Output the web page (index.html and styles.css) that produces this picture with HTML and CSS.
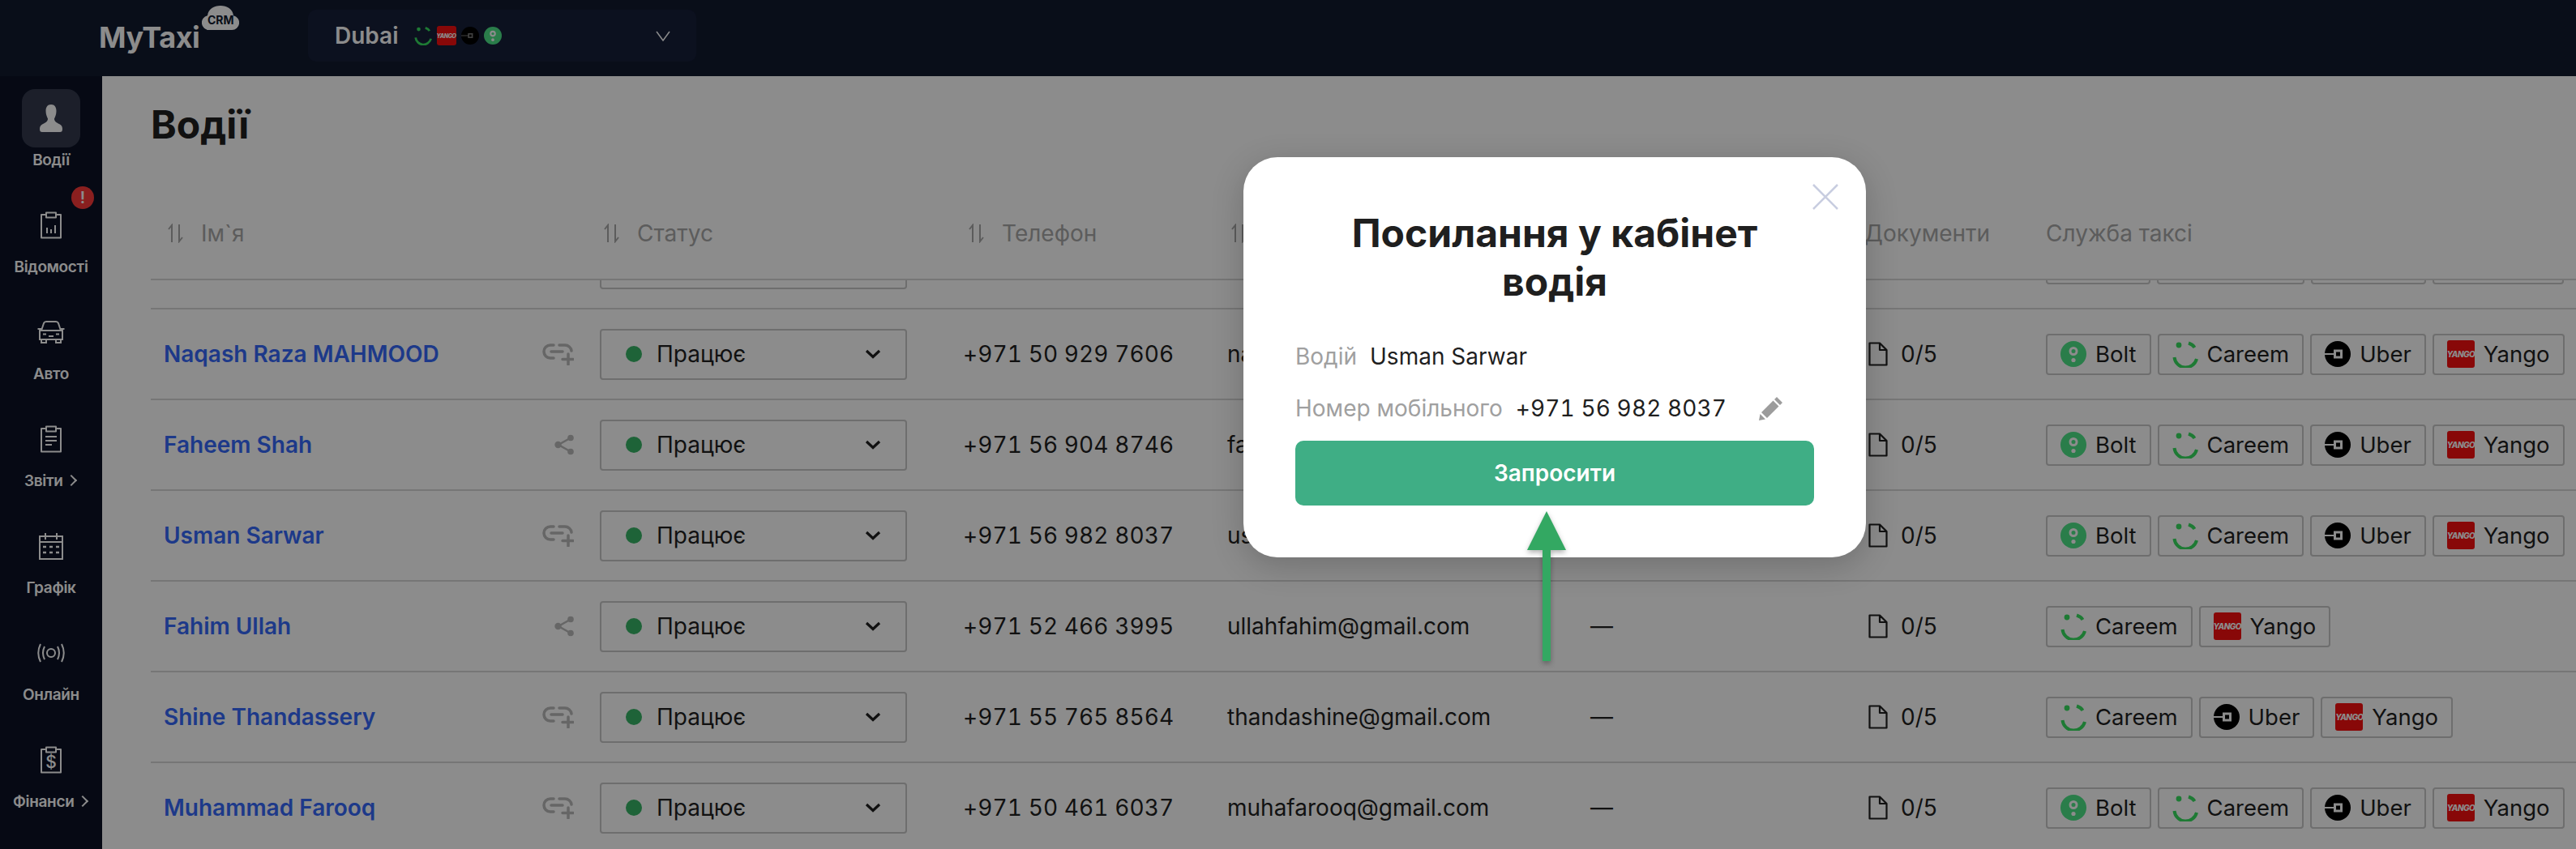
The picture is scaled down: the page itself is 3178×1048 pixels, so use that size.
FILE: index.html
```html
<!DOCTYPE html>
<html lang="uk">
<head>
    <meta charset="UTF-8">
    <title>MyTaxi CRM - Водії</title>
    <link rel="stylesheet" href="styles.css">
</head>
<body>
    <svg class="sprite" xmlns="http://www.w3.org/2000/svg">
        <symbol id="bolt" viewBox="0 0 32 32">
            <circle cx="16" cy="16" r="16" fill="#4ee388"/>
            <circle cx="16" cy="12.5" r="4" fill="#4ee388" stroke="#fff" stroke-width="3"/>
            <circle cx="16" cy="23.5" r="2.6" fill="#fff"/>
        </symbol>
        <symbol id="careem" viewBox="0 0 32 33">
            <circle cx="8" cy="5" r="3.4" fill="#38de60"/>
            <path d="M20 2.5C23 3.5 26 5.5 27.5 8M2.5 20A14 14 0 0 0 30 22" fill="none" stroke="#38de60" stroke-width="4"/>
        </symbol>
        <symbol id="uber" viewBox="0 0 32 32">
            <circle cx="16" cy="16" r="16" fill="#000"/>
            <path d="M0 15H11V10.5H22V21.5H11V17H0Z" fill="#fff"/>
            <rect x="14" y="13.5" width="5" height="5" fill="#000"/>
        </symbol>
        <symbol id="uber-small" viewBox="0 0 32 32">
            <circle cx="16" cy="16" r="16" fill="#000"/>
            <path d="M0 15.2H12V11.5H21V20.5H12V16.8H0Z" fill="#777"/>
            <rect x="14.5" y="14" width="4" height="4" fill="#000"/>
        </symbol>
        <symbol id="link" viewBox="0 0 40 27">
            <path d="M15 2H11A8 8 0 0 0 11 18H15M12 10H26M22 2H29A8 8 0 0 1 37 9M33 13V26M26 19.5H39" fill="none" stroke="#bababa" stroke-width="3.5" stroke-linecap="round"/>
        </symbol>
        <symbol id="share" viewBox="0 0 24 26">
            <path d="M20 4.5L5 13L20 21.5" fill="none" stroke="#bababa" stroke-width="2.5"/>
            <circle cx="20" cy="4.5" r="3.8" fill="#bababa"/>
            <circle cx="4.5" cy="13" r="4.2" fill="#bababa"/>
            <circle cx="20" cy="21.5" r="3.8" fill="#bababa"/>
        </symbol>
        <symbol id="sort" viewBox="0 0 19 24">
            <path d="M5 23V2L1 7M14 1V22L18 17" fill="none" stroke="#a8a8a8" stroke-width="2"/>
        </symbol>
        <symbol id="arrow-down" viewBox="0 0 20 12">
            <path d="M2 2L10 9.5L18 2" fill="none" stroke="#1f1f1f" stroke-width="3.2"/>
        </symbol>
        <symbol id="file" viewBox="0 0 24 30">
            <path d="M1.5 1.5H14L22.5 10V28.5H1.5ZM14 1.5V10H22.5" fill="none" stroke="#1f1f1f" stroke-width="2.2" stroke-linejoin="round"/>
        </symbol>
    </svg>

    <header class="topbar">
        <div class="logo">
            <span class="logo-name">MyTaxi</span>
            <span class="logo-crm">
                <svg viewBox="0 0 46 30" width="46" height="30"><path d="M9 30A9 9 0 0 1 7 12.2C8 4 15 0 23 0C31 0 38 4 39 12.2A9 9 0 0 1 37 30Z" fill="#fff"/></svg>
                <b>CRM</b>
            </span>
        </div>
        <div class="city-select">
            <span class="city-name">Dubai</span>
            <svg class="city-icon" width="22" height="24"><use href="#careem"/></svg>
            <span class="yango yango-small">YANGO</span>
            <svg class="city-icon" width="22" height="24"><use href="#uber-small"/></svg>
            <svg class="city-icon" width="22" height="24"><use href="#bolt"/></svg>
            <svg class="city-chevron" width="18" height="13" viewBox="0 0 18 13"><path d="M1 1L9 12L17 1" fill="none" stroke="#fff" stroke-width="1.5"/></svg>
        </div>
    </header>

    <div class="layout">
        <nav class="sidebar">
            <a class="nav-item active">
                <span class="nav-icon">
                    <svg width="28" height="34" viewBox="0 0 28 34"><path d="M14 0C18.5 0 20.5 3.5 20.5 8C20.5 12 19 15.5 18 17.5C18 21 21 22.5 24 24C26.5 25.3 28 27 28 30C28 33 27 34 25 34H3C1 34 0 33 0 30C0 27 1.5 25.3 4 24C7 22.5 10 21 10 17.5C9 15.5 7.5 12 7.5 8C7.5 3.5 9.5 0 14 0Z" fill="#fff"/></svg>
                </span>
                <span class="nav-label">Водії</span>
            </a>
            <a class="nav-item">
                <span class="nav-badge">!</span>
                <span class="nav-icon">
                    <svg width="28" height="34" viewBox="0 0 28 34"><path d="M8 4H2V32.5H26V4H20M8 1.5H20V7.5H8ZM9 20V27M14 22V27M19 17V27" fill="none" stroke="#fff" stroke-width="2" stroke-linejoin="round"/></svg>
                </span>
                <span class="nav-label">Відомості</span>
            </a>
            <a class="nav-item">
                <span class="nav-icon">
                    <svg width="34" height="28" viewBox="0 0 34 28"><path d="M5 12L8 3C8.5 1.8 9.5 1 11 1H23C24.5 1 25.5 1.8 26 3L29 12M0.5 10H5M29 10H33.5M3 12H31V23H3ZM5 23V27H11V23M23 23V27H29V23M7 16.5H11M23 16.5H27M14 19H20" fill="none" stroke="#fff" stroke-width="2"/></svg>
                </span>
                <span class="nav-label">Авто</span>
            </a>
            <a class="nav-item">
                <span class="nav-icon">
                    <svg width="28" height="34" viewBox="0 0 28 34"><path d="M8 4H2V32.5H26V4H20M8 1.5H20V7.5H8ZM7 14H21M7 19H21M7 24H15" fill="none" stroke="#fff" stroke-width="2" stroke-linejoin="round"/></svg>
                </span>
                <span class="nav-label">Звіти <i class="nav-more"></i></span>
            </a>
            <a class="nav-item">
                <span class="nav-icon">
                    <svg width="30" height="34" viewBox="0 0 30 34"><path d="M1 5H29V33H1ZM1 12H29M8 1V9M22 1V9" fill="none" stroke="#fff" stroke-width="2"/><path d="M5 18H9M13 18H17M21 18H25M5 25H9M13 25H17M21 25H25" fill="none" stroke="#fff" stroke-width="2.5"/></svg>
                </span>
                <span class="nav-label">Графік</span>
            </a>
            <a class="nav-item">
                <span class="nav-icon">
                    <svg width="34" height="24" viewBox="0 0 34 24"><circle cx="17" cy="12" r="5" fill="none" stroke="#fff" stroke-width="2"/><path d="M9 4C6.5 9 6.5 15 9 20M25 4C27.5 9 27.5 15 25 20M4 1C0.5 8 0.5 16 4 23M30 1C33.5 8 33.5 16 30 23" fill="none" stroke="#fff" stroke-width="2"/></svg>
                </span>
                <span class="nav-label">Онлайн</span>
            </a>
            <a class="nav-item">
                <span class="nav-icon">
                    <svg width="28" height="34" viewBox="0 0 28 34"><path d="M8 4H2V32.5H26V4H20M8 1.5H20V7.5H8Z" fill="none" stroke="#fff" stroke-width="2" stroke-linejoin="round"/><text x="14" y="27" text-anchor="middle" class="nav-dollar">$</text></svg>
                </span>
                <span class="nav-label">Фінанси <i class="nav-more"></i></span>
            </a>
        </nav>

        <main class="content">
            <h1 class="page-title">Водії</h1>

            <div class="table-head table-grid">
                <div class="th"><svg class="sort" width="19" height="24"><use href="#sort"/></svg>Ім`я</div>
                <div class="th th-status"><svg class="sort" width="19" height="24"><use href="#sort"/></svg>Статус</div>
                <div class="th th-status"><svg class="sort" width="19" height="24"><use href="#sort"/></svg>Телефон</div>
                <div class="th th-status"><svg class="sort" width="19" height="24"><use href="#sort"/></svg></div>
                <div class="th"></div>
                <div class="th th-docs">Документи</div>
                <div class="th th-service">Служба таксі</div>
            </div>

            <div class="table-body">
                <!-- row scrolled under the table head, only its lower edge shows -->
                <div class="row table-grid row-first">
                    <div></div>
                    <div class="status"></div>
                    <div></div><div></div><div></div><div></div>
                    <div class="services">
                        <span class="chip chip-bolt"></span>
                        <span class="chip chip-careem"></span>
                        <span class="chip chip-uber"></span>
                        <span class="chip chip-yango"></span>
                    </div>
                </div>

                <div class="row table-grid">
                    <div class="cell-name"><a class="name">Naqash Raza MAHMOOD</a><svg class="act" width="40" height="27"><use href="#link"/></svg></div>
                    <div class="status"><i class="dot"></i>Працює<svg class="status-arrow" width="20" height="12"><use href="#arrow-down"/></svg></div>
                    <div class="phone">+971 50 929 7606</div>
                    <div>naqa</div>
                    <div>—</div>
                    <div class="docs"><svg width="24" height="30"><use href="#file"/></svg>0/5</div>
                    <div class="services">
                        <span class="chip"><svg width="32" height="32"><use href="#bolt"/></svg>Bolt</span>
                        <span class="chip"><svg width="32" height="33"><use href="#careem"/></svg>Careem</span>
                        <span class="chip"><svg width="32" height="32"><use href="#uber"/></svg>Uber</span>
                        <span class="chip"><span class="yango">YANGO</span>Yango</span>
                    </div>
                </div>

                <div class="row table-grid">
                    <div class="cell-name"><a class="name">Faheem Shah</a><svg class="act" width="24" height="26"><use href="#share"/></svg></div>
                    <div class="status"><i class="dot"></i>Працює<svg class="status-arrow" width="20" height="12"><use href="#arrow-down"/></svg></div>
                    <div class="phone">+971 56 904 8746</div>
                    <div>fahe</div>
                    <div>—</div>
                    <div class="docs"><svg width="24" height="30"><use href="#file"/></svg>0/5</div>
                    <div class="services">
                        <span class="chip"><svg width="32" height="32"><use href="#bolt"/></svg>Bolt</span>
                        <span class="chip"><svg width="32" height="33"><use href="#careem"/></svg>Careem</span>
                        <span class="chip"><svg width="32" height="32"><use href="#uber"/></svg>Uber</span>
                        <span class="chip"><span class="yango">YANGO</span>Yango</span>
                    </div>
                </div>

                <div class="row table-grid">
                    <div class="cell-name"><a class="name">Usman Sarwar</a><svg class="act" width="40" height="27"><use href="#link"/></svg></div>
                    <div class="status"><i class="dot"></i>Працює<svg class="status-arrow" width="20" height="12"><use href="#arrow-down"/></svg></div>
                    <div class="phone">+971 56 982 8037</div>
                    <div>usma</div>
                    <div>—</div>
                    <div class="docs"><svg width="24" height="30"><use href="#file"/></svg>0/5</div>
                    <div class="services">
                        <span class="chip"><svg width="32" height="32"><use href="#bolt"/></svg>Bolt</span>
                        <span class="chip"><svg width="32" height="33"><use href="#careem"/></svg>Careem</span>
                        <span class="chip"><svg width="32" height="32"><use href="#uber"/></svg>Uber</span>
                        <span class="chip"><span class="yango">YANGO</span>Yango</span>
                    </div>
                </div>

                <div class="row table-grid">
                    <div class="cell-name"><a class="name">Fahim Ullah</a><svg class="act" width="24" height="26"><use href="#share"/></svg></div>
                    <div class="status"><i class="dot"></i>Працює<svg class="status-arrow" width="20" height="12"><use href="#arrow-down"/></svg></div>
                    <div class="phone">+971 52 466 3995</div>
                    <div>ullahfahim@gmail.com</div>
                    <div>—</div>
                    <div class="docs"><svg width="24" height="30"><use href="#file"/></svg>0/5</div>
                    <div class="services">
                        <span class="chip"><svg width="32" height="33"><use href="#careem"/></svg>Careem</span>
                        <span class="chip"><span class="yango">YANGO</span>Yango</span>
                    </div>
                </div>

                <div class="row table-grid">
                    <div class="cell-name"><a class="name">Shine Thandassery</a><svg class="act" width="40" height="27"><use href="#link"/></svg></div>
                    <div class="status"><i class="dot"></i>Працює<svg class="status-arrow" width="20" height="12"><use href="#arrow-down"/></svg></div>
                    <div class="phone">+971 55 765 8564</div>
                    <div>thandashine@gmail.com</div>
                    <div>—</div>
                    <div class="docs"><svg width="24" height="30"><use href="#file"/></svg>0/5</div>
                    <div class="services">
                        <span class="chip"><svg width="32" height="33"><use href="#careem"/></svg>Careem</span>
                        <span class="chip"><svg width="32" height="32"><use href="#uber"/></svg>Uber</span>
                        <span class="chip"><span class="yango">YANGO</span>Yango</span>
                    </div>
                </div>

                <div class="row table-grid">
                    <div class="cell-name"><a class="name">Muhammad Farooq</a><svg class="act" width="40" height="27"><use href="#link"/></svg></div>
                    <div class="status"><i class="dot"></i>Працює<svg class="status-arrow" width="20" height="12"><use href="#arrow-down"/></svg></div>
                    <div class="phone">+971 50 461 6037</div>
                    <div>muhafarooq@gmail.com</div>
                    <div>—</div>
                    <div class="docs"><svg width="24" height="30"><use href="#file"/></svg>0/5</div>
                    <div class="services">
                        <span class="chip"><svg width="32" height="32"><use href="#bolt"/></svg>Bolt</span>
                        <span class="chip"><svg width="32" height="33"><use href="#careem"/></svg>Careem</span>
                        <span class="chip"><svg width="32" height="32"><use href="#uber"/></svg>Uber</span>
                        <span class="chip"><span class="yango">YANGO</span>Yango</span>
                    </div>
                </div>
            </div>
        </main>
    </div>

    <div class="overlay">
        <div class="modal">
            <svg class="modal-close" width="32" height="32" viewBox="0 0 32 32"><path d="M1 1L31 31M31 1L1 31" fill="none" stroke="#c8cde0" stroke-width="2.5"/></svg>
            <h2 class="modal-title">Посилання у кабінет водія</h2>
            <div class="field"><span class="field-label">Водій</span>Usman Sarwar</div>
            <div class="field field-phone">
                <span class="field-label">Номер мобільного</span><span class="phone">+971 56 982 8037</span>
                <svg class="field-edit" width="30" height="30" viewBox="0 0 30 30"><path d="M22 1L29 8L26 11L19 4ZM17.5 5.5L24.5 12.5L10 27L3 20ZM1.5 22L8 28.5L0 30Z" fill="#9c9c9c"/></svg>
            </div>
            <button class="invite">Запросити</button>
        </div>
        <svg class="pointer" width="52" height="190" viewBox="0 0 52 190"><path d="M26 2L50 50H31V187H21V50H2Z" fill="#33a862"/></svg>
    </div>
</body>
</html>
```

FILE: styles.css
```css
* {
    margin: 0;
    padding: 0;
    box-sizing: border-box;
}
html, body {
    height: 100%;
    overflow: hidden;
}
body {
    font-family: Inter, "Liberation Sans", sans-serif;
    font-size: 28px;
    color: #1f1f1f;
    background: #fff;
}
.sprite {
    display: none;
}

/* top bar */
.topbar {
    height: 94px;
    background: #121a2f;
    display: flex;
    align-items: center;
    padding: 0 0 6px 122px;
    color: #fff;
}
.logo {
    width: 258px;
    display: flex;
    align-items: flex-start;
    height: 88px;
}
.logo-name {
    font-size: 36px;
    font-weight: 700;
    margin-top: 24px;
    letter-spacing: -0.5px;
}
.logo-crm {
    position: relative;
    width: 46px;
    height: 30px;
    margin: 7px 0 0 3px;
}
.logo-crm b {
    position: absolute;
    left: 0;
    right: 0;
    top: 9px;
    text-align: center;
    font-size: 14px;
    line-height: 18px;
    color: #121a2f;
}
.city-select {
    width: 479px;
    height: 64px;
    background: #161f3a;
    border-radius: 10px;
    display: flex;
    align-items: center;
    gap: 6px;
    padding: 0 32px 0 33px;
}
.city-name {
    font-weight: 600;
    margin-right: 13px;
    line-height: 1;
}
.city-chevron {
    margin-left: auto;
}
.yango {
    width: 34px;
    height: 34px;
    background: #f70f0f;
    border-radius: 3px;
    color: #fff;
    font-size: 10px;
    font-style: italic;
    font-weight: 800;
    letter-spacing: -0.6px;
    display: flex;
    align-items: center;
    justify-content: center;
    flex: none;
}
.yango-small {
    width: 24px;
    height: 24px;
    font-size: 7px;
    letter-spacing: -0.4px;
}

.layout {
    display: flex;
    height: calc(100% - 94px);
}

/* left menu */
.sidebar {
    width: 126px;
    flex: none;
    background: #0b1226;
    padding-top: 16px;
    display: flex;
    flex-direction: column;
    align-items: center;
}
.nav-item {
    position: relative;
    height: 132px;
    width: 126px;
    display: flex;
    flex-direction: column;
    align-items: center;
    color: #fff;
}
.nav-icon {
    width: 72px;
    height: 72px;
    border-radius: 16px;
    display: flex;
    align-items: center;
    justify-content: center;
}
.active .nav-icon {
    background: #343a4e;
}
.nav-label {
    margin-top: 4px;
    font-size: 19px;
    line-height: 24px;
    font-weight: 600;
    white-space: nowrap;
    letter-spacing: -0.3px;
}
.nav-more {
    display: inline-block;
    width: 10px;
    height: 10px;
    border-top: 2px solid #fff;
    border-right: 2px solid #fff;
    transform: rotate(45deg);
    margin: 0 3px 2px 1px;
}
.nav-badge {
    position: absolute;
    left: 88px;
    top: -12px;
    width: 28px;
    height: 28px;
    border-radius: 50%;
    background: #fb3a3a;
    color: #fff;
    font-size: 20px;
    font-weight: 600;
    line-height: 28px;
    text-align: center;
}
.nav-dollar {
    font-size: 21px;
    font-weight: 500;
    fill: #fff;
}

/* table */
.content {
    flex: 1;
    min-width: 0;
    padding-left: 60px;
    overflow: hidden;
}
.page-title {
    font-size: 48px;
    font-weight: 700;
    line-height: 58px;
    margin-top: 31px;
}
.table-grid {
    display: grid;
    grid-template-columns: 554px 450px 324px 448px 343px 219px 1fr;
    align-items: center;
}
.table-head {
    height: 112px;
    margin-top: 51px;
    border-bottom: 2px solid #d8d8d8;
    position: relative;
    background: #fff;
    z-index: 1;
}
.th {
    display: flex;
    align-items: center;
    gap: 22px;
    padding-left: 21px;
    color: #a8a8a8;
    font-size: 28px;
    padding-bottom: 2px;
}
.th-status {
    padding-left: 5px;
}
.th-docs {
    padding-left: 0;
    margin-left: -5px;
}
.th-service {
    padding-left: 0;
}
.table-body {
    overflow: hidden;
}
.row {
    height: 112px;
    border-bottom: 2px solid #d8d8d8;
    font-size: 28px;
    white-space: nowrap;
}
.row-first {
    margin-top: -76px;
}
.cell-name {
    display: flex;
    align-items: center;
    padding-left: 16px;
    padding-right: 32px;
}
.name {
    color: #3569fa;
    font-weight: 600;
    flex: 1;
}
.act {
    flex: none;
}
.phone {
    font-variant-numeric: tabular-nums;
    letter-spacing: 0.1px;
    margin-left: -2px;
}
.status {
    width: 379px;
    height: 63px;
    border: 2px solid #c8c8c8;
    border-radius: 4px;
    display: flex;
    align-items: center;
    padding: 0 30px 0 30px;
}
.dot {
    width: 20px;
    height: 20px;
    border-radius: 50%;
    background: #37b566;
    margin-right: 18px;
}
.status-arrow {
    margin-left: auto;
}
.docs {
    display: flex;
    align-items: center;
    gap: 16px;
}
.services {
    display: flex;
    gap: 8px;
}
.chip {
    height: 51px;
    border: 2px solid #c8c8c8;
    border-radius: 4px;
    display: flex;
    align-items: center;
    gap: 11px;
    padding: 0 16px;
    font-size: 27.5px;
}
.chip-bolt {
    width: 129px;
}
.chip-careem {
    width: 182px;
}
.chip-uber {
    width: 142px;
}
.chip-yango {
    width: 162px;
}

/* invite dialog */
.overlay {
    position: absolute;
    inset: 0;
    background: rgba(0, 0, 0, 0.45);
    z-index: 5;
}
.modal {
    position: absolute;
    left: 1534px;
    top: 194px;
    width: 768px;
    height: 494px;
    background: #fff;
    border-radius: 42px;
    padding: 64px 64px 0;
    box-shadow: 0 10px 40px rgba(0, 0, 0, 0.2);
}
.modal-close {
    position: absolute;
    right: 34px;
    top: 33px;
}
.modal-title {
    font-size: 48px;
    font-weight: 700;
    line-height: 60px;
    text-align: center;
    margin-bottom: 30px;
    padding: 0 60px;
}
.field {
    height: 64px;
    display: flex;
    align-items: center;
    font-size: 28px;
    white-space: nowrap;
}
.field-label {
    color: #a0a0a0;
    margin-right: 16px;
}
.field .phone {
    margin-left: 0;
}
.field-edit {
    margin-left: 40px;
}
.invite {
    display: block;
    width: 640px;
    height: 80px;
    margin-top: 8px;
    border: 0;
    border-radius: 10px;
    background: #3fae85;
    color: #fff;
    font-family: inherit;
    font-size: 28px;
    font-weight: 600;
}
.pointer {
    position: absolute;
    left: 1882px;
    top: 629px;
    filter: drop-shadow(0 3px 3px rgba(0, 0, 0, 0.3));
}
```
